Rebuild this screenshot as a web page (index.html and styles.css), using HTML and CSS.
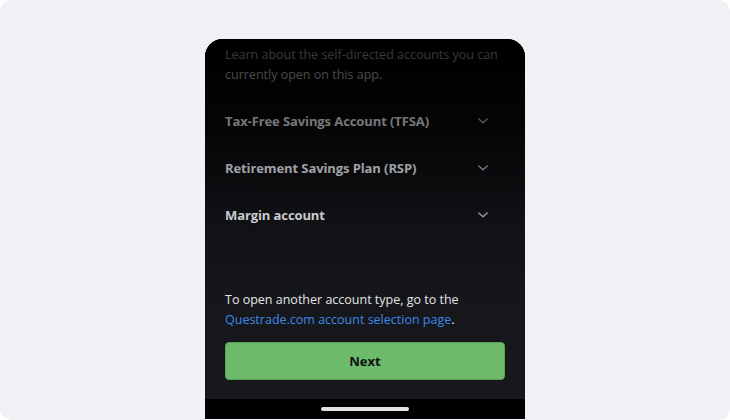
FILE: index.html
```html
<!DOCTYPE html>
<html lang="en">
<head>
    <meta charset="UTF-8">
    <meta name="viewport" content="width=device-width, initial-scale=1.0">
    <title>Account types</title>
    <link rel="stylesheet" href="styles.css">
</head>
<body>

<main class="stage">
    <div class="phone">
        <div class="screen">
            <p class="intro">Learn about the self-directed accounts you can currently open on this app.</p>

            <div class="accordion">
                <div class="acc-row">
                    <span class="acc-title">Tax-Free Savings Account (TFSA)</span>
                    <svg class="chevron" width="12" height="8" viewBox="0 0 12 8"><path d="M1.8 2 L6 5.8 L10.2 2" fill="none" stroke="#9a9ca3" stroke-width="1.5" stroke-linecap="round" stroke-linejoin="round"/></svg>
                </div>
                <div class="acc-row">
                    <span class="acc-title">Retirement Savings Plan (RSP)</span>
                    <svg class="chevron" width="12" height="8" viewBox="0 0 12 8"><path d="M1.8 2 L6 5.8 L10.2 2" fill="none" stroke="#9a9ca3" stroke-width="1.5" stroke-linecap="round" stroke-linejoin="round"/></svg>
                </div>
                <div class="acc-row">
                    <span class="acc-title">Margin account</span>
                    <svg class="chevron" width="12" height="8" viewBox="0 0 12 8"><path d="M1.8 2 L6 5.8 L10.2 2" fill="none" stroke="#9a9ca3" stroke-width="1.5" stroke-linecap="round" stroke-linejoin="round"/></svg>
                </div>
            </div>

            <div class="footer">
                <p class="note">To open another account type, go to the <a href="#">Questrade.com account selection page</a>.</p>
                <button class="next-btn">Next</button>
            </div>

            <div class="fade"></div>
        </div>
        <div class="home-bar"><span class="home-indicator"></span></div>
    </div>
</main>

</body>
</html>
```

FILE: styles.css
```css
body {
    margin: 0;
    padding: 0;
    background-color: #ffffff;
    font-family: "Open Sans", "Noto Sans", sans-serif;
}
.stage {
    width: 730px;
    height: 420px;
    background-color: #f0f0f5;
    border-radius: 12px;
    display: flex;
    justify-content: center;
    padding-top: 39px;
    box-sizing: border-box;
    overflow: hidden;
}
.phone {
    width: 320px;
    height: 380px;
    border-radius: 18px 18px 0 0;
    overflow: hidden;
    display: flex;
    flex-direction: column;
    background-color: #000;
}
.screen {
    position: relative;
    flex: 1;
    display: flex;
    flex-direction: column;
    padding: 6px 20px 19px 20px;
    background: linear-gradient(#000000 0%, #0f1013 45%, #16171b 75%, #17181c 100%);
}
.intro {
    margin: 0;
    font-size: 12.5px;
    line-height: 20px;
    color: #c9cacf;
}
.accordion {
    margin-top: 12px;
}
.acc-row {
    height: 47px;
    display: flex;
    align-items: center;
    justify-content: space-between;
}
.acc-title {
    font-size: 13px;
    font-weight: 700;
    color: #d2d3d7;
    letter-spacing: -0.1px;
}
.chevron {
    margin-right: 16px;
}
.footer {
    margin-top: auto;
}
.note {
    margin: 0 0 12px;
    font-size: 12.5px;
    line-height: 20px;
    color: #e4e5e8;
}
.note a {
    color: #3f88e8;
    text-decoration: none;
}
.next-btn {
    display: block;
    width: 100%;
    height: 38px;
    border: 1px solid #5c9e59;
    border-radius: 4px;
    background-color: #6dba6a;
    color: #111;
    font-family: "Open Sans", "Noto Sans", sans-serif;
    font-size: 13px;
    font-weight: 700;
}
/* dim the content scrolled under the top edge */
.fade {
    position: absolute;
    left: 0;
    right: 0;
    top: 0;
    height: 185px;
    background: linear-gradient(rgba(0,0,0,0.8), rgba(0,0,0,0));
    pointer-events: none;
}
.home-bar {
    height: 20px;
    background-color: #000;
    display: flex;
    justify-content: center;
    padding-top: 8px;
    box-sizing: border-box;
}
.home-indicator {
    width: 88px;
    height: 4px;
    border-radius: 2px;
    background-color: #e2e2e2;
}
```
